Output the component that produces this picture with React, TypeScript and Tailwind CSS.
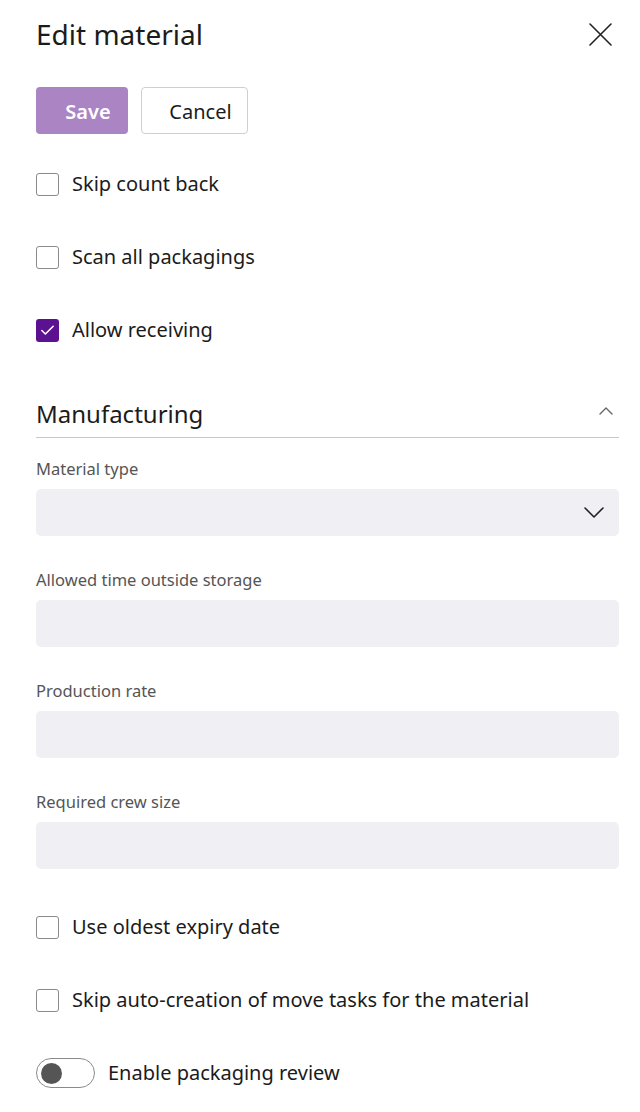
import { Check } from 'lucide-react';

const font = { fontFamily: '"Segoe UI", "Noto Sans", sans-serif' };

function CheckRow({ label, checked = false }: { label: string; checked?: boolean }) {
    return (
        <label className="flex items-center gap-[13px] h-[24px]">
            {checked ? (
                <span className="w-[23px] h-[23px] rounded-[3px] bg-[#5c1190] flex items-center justify-center">
                    <Check className="w-[17px] h-[17px] text-white" strokeWidth={2.2} />
                </span>
            ) : (
                <span className="w-[23px] h-[23px] rounded-[3px] border border-[#8a8a8a] bg-white" />
            )}
            <span className="text-[20px] text-[#1b1b1b] leading-none">{label}</span>
        </label>
    );
}

function Field({ label, select = false }: { label: string; select?: boolean }) {
    return (
        <div className="flex flex-col">
            <span className="text-[16.5px] text-[#555] leading-[22px]">{label}</span>
            <div className="mt-[9px] h-[47px] rounded-[5px] bg-[#f0f0f4] flex items-center justify-end pr-[15px]">
                {select && (
                    <svg width="20" height="11" viewBox="0 0 20 11" fill="none" stroke="#222" strokeWidth="1.6" strokeLinecap="round" strokeLinejoin="round">
                        <path d="M1 1l9 9 9-9" />
                    </svg>
                )}
            </div>
        </div>
    );
}

export default function App() {
    return (
        <div className="w-full h-[1112px] bg-white pl-[36px] pr-[21px] pt-[18px]" style={font}>
            {/* Header */}
            <div className="flex items-center justify-between h-[32px] pr-[7px]">
                <h1 className="text-[28px] text-[#1b1b1b] leading-none">Edit material</h1>
                <svg width="23" height="23" viewBox="0 0 23 23" fill="none" stroke="#222" strokeWidth="1.6" strokeLinecap="round">
                    <path d="M1 1l21 21M22 1L1 22" />
                </svg>
            </div>

            {/* Actions */}
            <div className="flex gap-[13px] mt-[37px]">
                <button className="w-[92px] h-[47px] rounded-[4px] bg-[#ab84c4] text-white text-[20px] font-semibold pl-[12px] pt-[3px]">
                    Save
                </button>
                <button className="w-[107px] h-[47px] rounded-[4px] border border-[#cfcfcf] bg-white text-[#1b1b1b] text-[20px] pl-[12px] pt-[3px]">
                    Cancel
                </button>
            </div>

            {/* Options */}
            <div className="flex flex-col gap-[49px] mt-[38px]">
                <CheckRow label="Skip count back" />
                <CheckRow label="Scan all packagings" />
                <CheckRow label="Allow receiving" checked />
            </div>

            {/* Manufacturing */}
            <div className="mt-[56px] flex items-center justify-between h-[32px] pr-[6px]">
                <span className="text-[24px] text-[#1b1b1b] leading-none">Manufacturing</span>
                <svg width="14" height="8" viewBox="0 0 14 8" fill="none" stroke="#666" strokeWidth="1.4" strokeLinecap="round" strokeLinejoin="round" className="-mt-[6px]">
                    <path d="M1 7l6-6 6 6" />
                </svg>
            </div>
            <div className="mt-[7px] border-t border-[#c8c8c8]" />

            <div className="flex flex-col gap-[33px] mt-[20px]">
                <Field label="Material type" select />
                <Field label="Allowed time outside storage" />
                <Field label="Production rate" />
                <Field label="Required crew size" />
            </div>

            <div className="flex flex-col gap-[49px] mt-[46px]">
                <CheckRow label="Use oldest expiry date" />
                <CheckRow label="Skip auto-creation of move tasks for the material" />
            </div>

            {/* Toggle */}
            <div className="flex items-center gap-[13px] mt-[46px]">
                <span className="w-[59px] h-[30px] rounded-full border border-[#8a8a8a] flex items-center px-[4px]">
                    <span className="w-[21px] h-[21px] rounded-full bg-[#555]" />
                </span>
                <span className="text-[20px] text-[#1b1b1b] leading-none">Enable packaging review</span>
            </div>
        </div>
    );
}
